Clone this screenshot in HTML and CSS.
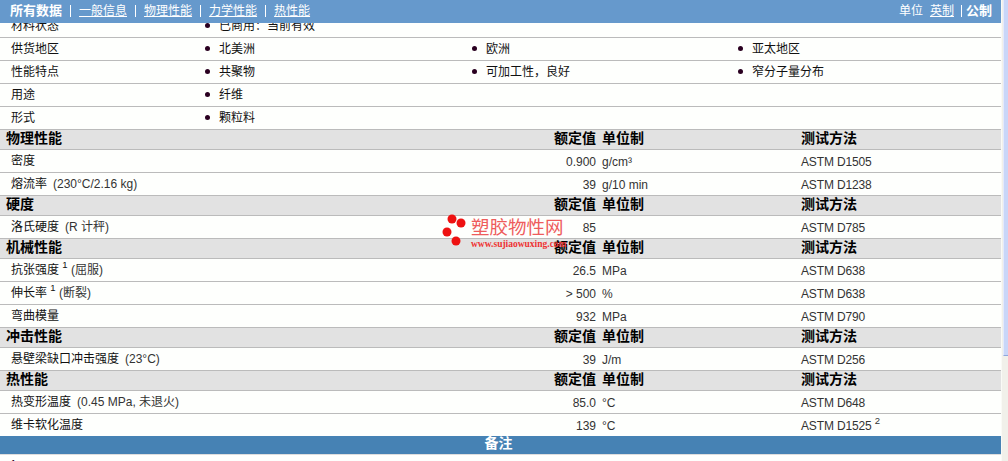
FILE: index.html
```html
<!DOCTYPE html>
<html lang="zh-CN">
<head>
<meta charset="utf-8">
<title>塑胶物性</title>
<link rel="stylesheet" href="styles.css">
</head>
<body>
<div class="window">
  <main class="page">
    <nav class="topbar">
      <div class="tabs">
        <b class="tab-active">所有数据</b><i class="sep"></i>
        <a href="#">一般信息</a><i class="sep"></i>
        <a href="#">物理性能</a><i class="sep"></i>
        <a href="#">力学性能</a><i class="sep"></i>
        <a href="#">热性能</a>
      </div>
      <div class="units">
        <span>单位</span><a href="#">英制</a><i class="sep sep-unit"></i><b>公制</b>
      </div>
    </nav>
    <div class="scroller">
      <div class="sheet">
        <div class="row prop"><span class="label">材料状态</span><span class="item">已商用：当前有效</span></div>
        <div class="row prop"><span class="label">供货地区</span><span class="item">北美洲</span><span class="item">欧洲</span><span class="item">亚太地区</span></div>
        <div class="row prop"><span class="label">性能特点</span><span class="item">共聚物</span><span class="item">可加工性，良好</span><span class="item">窄分子量分布</span></div>
        <div class="row prop"><span class="label">用途</span><span class="item">纤维</span></div>
        <div class="row prop"><span class="label">形式</span><span class="item">颗粒料</span></div>

        <div class="head"><span class="head-title">物理性能</span><span class="value">额定值</span><span class="unit">单位制</span><span>测试方法</span></div>
        <div class="row data"><span class="label">密度</span><span class="value">0.900</span><span class="unit">g/cm³</span><span class="test">ASTM D1505</span></div>
        <div class="row data"><span class="label">熔流率<span class="note">(230°C/2.16 kg)</span></span><span class="value">39</span><span class="unit">g/10 min</span><span class="test">ASTM D1238</span></div>

        <div class="head"><span class="head-title">硬度</span><span class="value">额定值</span><span class="unit">单位制</span><span>测试方法</span></div>
        <div class="row data"><span class="label">洛氏硬度<span class="note">(R 计秤)</span></span><span class="value">85</span><span class="unit"></span><span class="test">ASTM D785</span></div>

        <div class="head"><span class="head-title">机械性能</span><span class="value">额定值</span><span class="unit">单位制</span><span>测试方法</span></div>
        <div class="row data"><span class="label">抗张强度 <sup>1</sup> <span class="note-tight">(屈服)</span></span><span class="value">26.5</span><span class="unit">MPa</span><span class="test">ASTM D638</span></div>
        <div class="row data"><span class="label">伸长率 <sup>1</sup> <span class="note-tight">(断裂)</span></span><span class="value">&gt; 500</span><span class="unit">%</span><span class="test">ASTM D638</span></div>
        <div class="row data"><span class="label">弯曲模量</span><span class="value">932</span><span class="unit">MPa</span><span class="test">ASTM D790</span></div>

        <div class="head"><span class="head-title">冲击性能</span><span class="value">额定值</span><span class="unit">单位制</span><span>测试方法</span></div>
        <div class="row data"><span class="label">悬壁梁缺口冲击强度<span class="note">(23°C)</span></span><span class="value">39</span><span class="unit">J/m</span><span class="test">ASTM D256</span></div>

        <div class="head"><span class="head-title">热性能</span><span class="value">额定值</span><span class="unit">单位制</span><span>测试方法</span></div>
        <div class="row data"><span class="label">热变形温度<span class="note">(0.45 MPa, 未退火)</span></span><span class="value">85.0</span><span class="unit">°C</span><span class="test">ASTM D648</span></div>
        <div class="row data row-last"><span class="label">维卡软化温度</span><span class="value">139</span><span class="unit">°C</span><span class="test">ASTM D1525 <sup>2</sup></span></div>

        <div class="band">备注</div>
        <div class="footnote">1</div>
      </div>
    </div>
    <div class="watermark">
      <svg class="wm-dots" width="28" height="36" viewBox="0 0 28 36" aria-hidden="true">
        <circle cx="10" cy="5" r="4.5"/>
        <circle cx="19" cy="9" r="4.5"/>
        <circle cx="5" cy="18" r="4.5"/>
        <circle cx="14" cy="27" r="4.5"/>
      </svg>
      <div class="wm-text">
        <span class="wm-name">塑胶物性网</span>
        <span class="wm-url">www.sujiaowuxing.com</span>
      </div>
    </div>
  </main>
  <aside class="scrollbar"><div class="thumb"></div></aside>
</div>
</body>
</html>
```

FILE: styles.css
```css
html, body {
  margin: 0;
  height: 461px;
  overflow: hidden;
  background: #fefffd;
}

body {
  font-family: "Liberation Sans", "Noto Sans CJK SC", sans-serif;
  font-size: 12px;
  color: #111;
}

.window {
  display: flex;
  height: 461px;
}

.page {
  position: relative;
  width: 1001px;
  display: flex;
  flex-direction: column;
}

.topbar {
  flex: 0 0 23px;
  box-sizing: border-box;
  display: flex;
  justify-content: space-between;
  align-items: center;
  background: #6699cc;
  color: #fff;
  padding: 0 9px 2px 10px;
  line-height: 20px;
}

.topbar a {
  color: #fff;
}

.tabs, .units {
  display: flex;
  align-items: center;
}

.tab-active, .units b {
  font-size: 13px;
}

.sep {
  width: 1px;
  height: 12px;
  background: #fff;
  margin: 0 8px;
}

.units span {
  margin-right: 7px;
}

.sep-unit {
  margin: 0 4px 0 7px;
}

.scroller {
  flex: 1;
  overflow: hidden;
}

.sheet {
  margin-top: -8px;
}

.row {
  display: grid;
  box-sizing: border-box;
  height: 23px;
  border-bottom: 1px solid #bbbbbb;
  align-items: center;
  line-height: 22px;
}

.prop {
  grid-template-columns: 205px 267px 266px 263px;
}

.data, .head {
  grid-template-columns: 440px 156px 205px 200px;
}

.data {
  line-height: 20px;
}

.data .value, .data .unit, .data .test {
  padding-top: 2px;
}

.label {
  padding-left: 11px;
}

.item {
  display: flex;
  align-items: center;
  padding-left: 14px;
  position: relative;
}

.item::before {
  content: "";
  position: absolute;
  left: 0;
  top: 50%;
  width: 5px;
  height: 5px;
  margin-top: -3px;
  border-radius: 50%;
  background: #2a0020;
}

.value {
  text-align: right;
  color: #333;
}

.unit {
  padding-left: 6px;
  color: #333;
}

.test {
  color: #333;
  letter-spacing: -0.15px;
}

.note {
  color: #333;
  margin-left: 6px;
}

.note-tight {
  color: #333;
}

sup {
  font-size: 9.5px;
  line-height: 0;
  vertical-align: 6px;
}

.head {
  display: grid;
  box-sizing: border-box;
  height: 20px;
  align-items: center;
  background: #e2e2e2;
  border-bottom: 1px solid #bbbbbb;
  font-size: 14px;
  font-weight: 700;
  line-height: 17px;
  color: #000;
  padding-bottom: 3px;
}

.head .value, .head .unit {
  color: #000;
}

.head-title {
  padding-left: 6px;
}

.row-last {
  height: 22px;
  border-bottom: 0;
}

.band {
  height: 18px;
  background: #4682b4;
  color: #fff;
  font-size: 14px;
  font-weight: 700;
  line-height: 15px;
  text-align: center;
  border-bottom: 1px solid #dddddd;
  padding-right: 4px;
}

.footnote {
  padding: 3px 0 0 10px;
  line-height: 14px;
  color: #300020;
}

.watermark {
  position: absolute;
  left: 442px;
  top: 214px;
  display: flex;
  gap: 1px;
  pointer-events: none;
}

.wm-dots {
  fill: #ee1111;
}

.wm-text {
  display: flex;
  flex-direction: column;
  margin-top: 3px;
}

.wm-name {
  font-size: 18.5px;
  line-height: 22px;
  color: #ee5c5c;
  white-space: nowrap;
}

.wm-url {
  font-family: "Liberation Serif", serif;
  font-size: 9.5px;
  font-weight: 700;
  line-height: 10px;
  color: #ee3333;
  white-space: nowrap;
}

.scrollbar {
  flex: 0 0 7px;
  height: 461px;
  background: #f1f0ea;
  border-left: 1px solid #fafaf6;
  box-sizing: border-box;
}

.thumb {
  margin-left: 1px;
  height: 356px;
  box-sizing: border-box;
  background: #c9d6f8;
  border-bottom: 1px solid #8fa6dc;
  border-left: 1px solid #e4eafc;
}
```
